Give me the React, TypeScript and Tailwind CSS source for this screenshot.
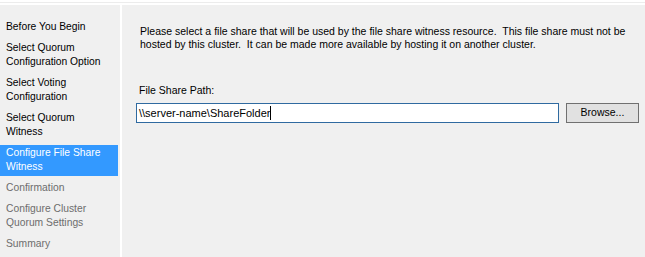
import React from "react";

type Item = { lines: string[]; state: "done" | "active" | "todo" };

const items: Item[] = [
  { lines: ["Before You Begin"], state: "done" },
  { lines: ["Select Quorum", "Configuration Option"], state: "done" },
  { lines: ["Select Voting", "Configuration"], state: "done" },
  { lines: ["Select Quorum", "Witness"], state: "done" },
  { lines: ["Configure File Share", "Witness"], state: "active" },
  { lines: ["Confirmation"], state: "todo" },
  { lines: ["Configure Cluster", "Quorum Settings"], state: "todo" },
  { lines: ["Summary"], state: "todo" },
];

export default function App() {
  return (
    <div
      className="w-[645px] h-[257px] bg-white overflow-hidden flex flex-col"
      style={{ fontFamily: '"Liberation Sans", Arial, sans-serif' }}
    >
      <div className="h-[5px] shrink-0 flex flex-col">
        <div className="h-[2px]" />
        <div className="h-[1px] bg-[#ececec]" />
      </div>
      <div className="flex flex-1 gap-[2px] min-h-0">
        <div className="w-[120px] shrink-0 bg-[#f0f0f0] pt-[11.5px] pr-[2px] flex flex-col">
          {items.map((it, i) => (
            <div
              key={i}
              className={
                "my-[2px] py-[1.5px] pl-[6px] text-[10.3px] leading-[14px] " +
                (it.state === "active"
                  ? "bg-[#3399ff] text-white"
                  : it.state === "todo"
                  ? "text-[#6d6d6d]"
                  : "text-black")
              }
            >
              {it.lines.map((l, j) => (
                <div key={j} className="whitespace-nowrap">
                  {l}
                </div>
              ))}
            </div>
          ))}
        </div>
        <div className="flex-1 bg-[#f0f0f0] pl-[14px] pr-[6px] pt-[20px] flex flex-col">
          <div className="pl-[4px] text-[10.5px] leading-[12.5px] text-black whitespace-pre">
            {"Please select a file share that will be used by the file share witness resource.  This file share must not be"}
            <br />
            {"hosted by this cluster.  It can be made more available by hosting it on another cluster."}
          </div>
          <div className="mt-[34px] pl-[3px] text-[10.5px] leading-[13px] text-black">
            File Share Path:
          </div>
          <div className="mt-[6px] flex gap-[7px]">
            <div className="w-[423px] h-[20px] bg-white border border-[#2f6aa0] flex items-center pl-[2px] text-[11px] text-black whitespace-pre">
              <span>{"\\\\server-name\\ShareFolder"}</span>
              <span className="inline-block w-[1px] h-[14px] bg-black" />
            </div>
            <div className="w-[73px] h-[20px] bg-[#e1e1e1] border border-[#707070] flex items-center justify-center text-[10.5px] text-black">
              Browse...
            </div>
          </div>
        </div>
      </div>
    </div>
  );
}
